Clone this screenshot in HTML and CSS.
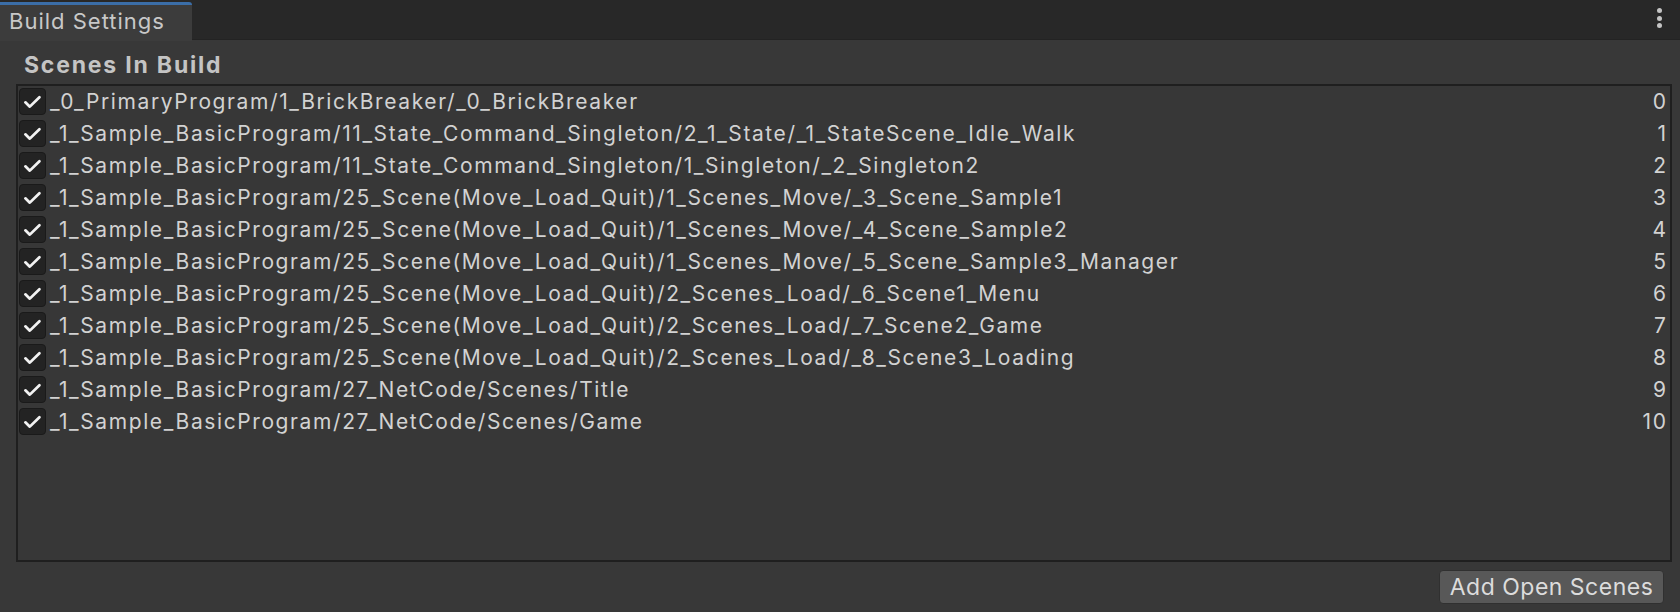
FILE: index.html
```html
<!DOCTYPE html>
<html>
<head>
<meta charset="utf-8">
<link rel="stylesheet" href="styles.css">
</head>
<body>
<div class="tabbar">
  <div class="tab">Build Settings</div>
  <div class="menu"><span></span><span></span><span></span></div>
</div>
<div class="content">
  <div class="header">Scenes In Build</div>
  <div class="list">
    <div class="row"><span class="cb"><svg viewBox="0 0 27 26"><path d="M5.8 13.4 L10.6 18 L21 7.8"/></svg></span><span class="name">_0_PrimaryProgram/1_BrickBreaker/_0_BrickBreaker</span><span class="idx">0</span></div>
    <div class="row"><span class="cb"><svg viewBox="0 0 27 26"><path d="M5.8 13.4 L10.6 18 L21 7.8"/></svg></span><span class="name">_1_Sample_BasicProgram/11_State_Command_Singleton/2_1_State/_1_StateScene_Idle_Walk</span><span class="idx">1</span></div>
    <div class="row"><span class="cb"><svg viewBox="0 0 27 26"><path d="M5.8 13.4 L10.6 18 L21 7.8"/></svg></span><span class="name">_1_Sample_BasicProgram/11_State_Command_Singleton/1_Singleton/_2_Singleton2</span><span class="idx">2</span></div>
    <div class="row"><span class="cb"><svg viewBox="0 0 27 26"><path d="M5.8 13.4 L10.6 18 L21 7.8"/></svg></span><span class="name">_1_Sample_BasicProgram/25_Scene(Move_Load_Quit)/1_Scenes_Move/_3_Scene_Sample1</span><span class="idx">3</span></div>
    <div class="row"><span class="cb"><svg viewBox="0 0 27 26"><path d="M5.8 13.4 L10.6 18 L21 7.8"/></svg></span><span class="name">_1_Sample_BasicProgram/25_Scene(Move_Load_Quit)/1_Scenes_Move/_4_Scene_Sample2</span><span class="idx">4</span></div>
    <div class="row"><span class="cb"><svg viewBox="0 0 27 26"><path d="M5.8 13.4 L10.6 18 L21 7.8"/></svg></span><span class="name">_1_Sample_BasicProgram/25_Scene(Move_Load_Quit)/1_Scenes_Move/_5_Scene_Sample3_Manager</span><span class="idx">5</span></div>
    <div class="row"><span class="cb"><svg viewBox="0 0 27 26"><path d="M5.8 13.4 L10.6 18 L21 7.8"/></svg></span><span class="name">_1_Sample_BasicProgram/25_Scene(Move_Load_Quit)/2_Scenes_Load/_6_Scene1_Menu</span><span class="idx">6</span></div>
    <div class="row"><span class="cb"><svg viewBox="0 0 27 26"><path d="M5.8 13.4 L10.6 18 L21 7.8"/></svg></span><span class="name">_1_Sample_BasicProgram/25_Scene(Move_Load_Quit)/2_Scenes_Load/_7_Scene2_Game</span><span class="idx">7</span></div>
    <div class="row"><span class="cb"><svg viewBox="0 0 27 26"><path d="M5.8 13.4 L10.6 18 L21 7.8"/></svg></span><span class="name">_1_Sample_BasicProgram/25_Scene(Move_Load_Quit)/2_Scenes_Load/_8_Scene3_Loading</span><span class="idx">8</span></div>
    <div class="row"><span class="cb"><svg viewBox="0 0 27 26"><path d="M5.8 13.4 L10.6 18 L21 7.8"/></svg></span><span class="name">_1_Sample_BasicProgram/27_NetCode/Scenes/Title</span><span class="idx">9</span></div>
    <div class="row"><span class="cb"><svg viewBox="0 0 27 26"><path d="M5.8 13.4 L10.6 18 L21 7.8"/></svg></span><span class="name">_1_Sample_BasicProgram/27_NetCode/Scenes/Game</span><span class="idx">10</span></div>
  </div>
  <div class="actions"><button class="btn">Add Open Scenes</button></div>
</div>
</body>
</html>
```

FILE: styles.css
```css
html, body {
  margin: 0;
  padding: 0;
  background: #383838;
  font-family: Inter, "Noto Sans", sans-serif;
  color: #d2d2d2;
  height: 612px;
  overflow: hidden;
}
.tabbar {
  height: 39px;
  background: #282828;
  border-bottom: 1px solid #232323;
  display: flex;
  align-items: flex-start;
  justify-content: space-between;
}
.tab {
  margin-top: 2px;
  width: 192px;
  height: 39px;
  margin-bottom: -2px;
  box-sizing: border-box;
  border-top: 3px solid #3b6ea8;
  border-top-right-radius: 3px;
  background: #3c3c3c;
  font-size: 22px;
  letter-spacing: 1px;
  line-height: 32px;
  padding-left: 9px;
  color: #c8c8c8;
}
.menu {
  display: flex;
  flex-direction: column;
  gap: 2.5px;
  padding: 8px 18px 0 0;
}
.menu span {
  width: 5px;
  height: 5px;
  border-radius: 50%;
  background: #c4c4c4;
}
.content {
  padding: 0 10px 0 16px;
}
.header {
  font-weight: 700;
  font-size: 23px;
  letter-spacing: 1.8px;
  line-height: 28px;
  padding: 5px 0 0 8px;
  height: 35px;
  box-sizing: border-box;
  color: #c4c4c4;
  margin-top: 6px;
}
.list {
  box-sizing: border-box;
  height: 478px;
  border: 2px solid #1f1f1f;
  background: #373737;
  margin-top: 3px;
  width: 1656px;
}
.row {
  display: flex;
  align-items: center;
  height: 32px;
  box-sizing: border-box;
  padding-bottom: 1px;
  font-size: 21px;
  letter-spacing: 1.6px;
}
.cb {
  width: 27px;
  height: 27px;
  box-sizing: border-box;
  border: 1px solid #1a1a1a;
  border-radius: 4px;
  background: #232323;
  display: flex;
  align-items: center;
  justify-content: center;
  margin: 0 4px 0 1px;
  flex: none;
}
.cb svg {
  width: 27px;
  height: 26px;
  fill: none;
  stroke: #f2f2f2;
  stroke-width: 3;
  stroke-linecap: round;
  stroke-linejoin: round;
}
.name {
  flex: 1;
  white-space: nowrap;
}
.idx {
  padding-right: 4px;
  margin-right: -1.6px;
}
.actions {
  display: flex;
  justify-content: flex-end;
  padding: 8px 6px 0 0;
}
.btn {
  font-family: Inter, "Noto Sans", sans-serif;
  font-size: 23px;
  letter-spacing: 0.5px;
  color: #dcdcdc;
  background: #585858;
  border: 1px solid #303030;
  border-radius: 4px;
  height: 34px;
  width: 225px;
  padding: 0;
  line-height: 32px;
}
```
